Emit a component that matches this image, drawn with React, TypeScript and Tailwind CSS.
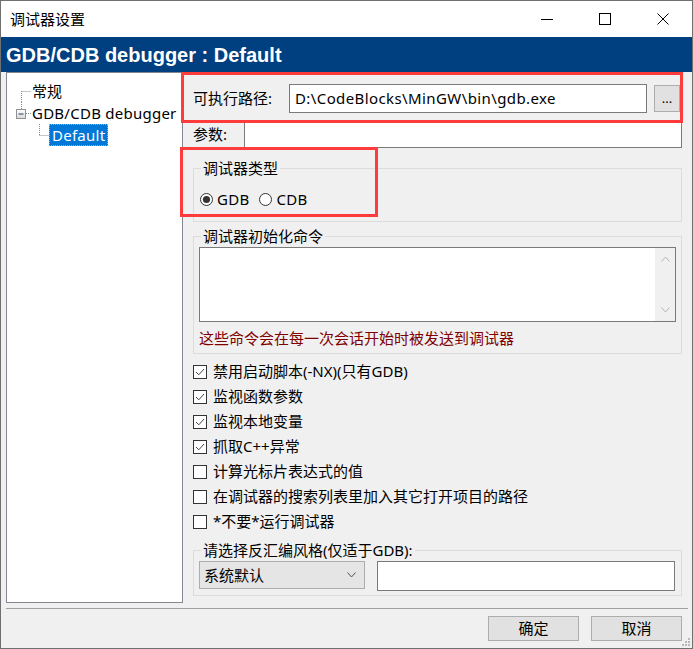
const ui = "font-['Noto_Sans','Noto_Sans_CJK_SC',sans-serif]";

function CheckBox({ checked }: { checked: boolean }) {
  return (
    <svg width="14" height="14" viewBox="0 0 14 14" className="shrink-0">
      <rect x="0.5" y="0.5" width="13" height="13" fill="#fff" stroke="#333" />
      {checked && (
        <polyline points="3,7 5.8,9.8 11,4" fill="none" stroke="#444" strokeWidth="1" />
      )}
    </svg>
  );
}

function Radio({ checked }: { checked: boolean }) {
  return (
    <svg width="13" height="13" viewBox="0 0 13 13" className="shrink-0">
      <circle cx="6.5" cy="6.5" r="6" fill="#fff" stroke="#333" />
      {checked && <circle cx="6.5" cy="6.5" r="3.6" fill="#333" />}
    </svg>
  );
}

const OPTIONS: [string, boolean][] = [
  ["禁用启动脚本(-NX)(只有GDB)", true],
  ["监视函数参数", true],
  ["监视本地变量", true],
  ["抓取C++异常", true],
  ["计算光标片表达式的值", false],
  ["在调试器的搜索列表里加入其它打开项目的路径", false],
  ["*不要*运行调试器", false],
];

function TitleBar() {
  return (
    <div className="flex h-[36px] items-center bg-white">
      <span className="pl-[9px] text-[15px] text-black">调试器设置</span>
      <div className="ml-auto flex h-full">
        <div className="flex w-[58px] items-center justify-center">
          <svg width="12" height="12" viewBox="0 0 12 12">
            <line x1="0" y1="6.5" x2="12" y2="6.5" stroke="#000" />
          </svg>
        </div>
        <div className="flex w-[58px] items-center justify-center">
          <svg width="12" height="12" viewBox="0 0 12 12">
            <rect x="0.5" y="0.5" width="11" height="11" fill="none" stroke="#000" />
          </svg>
        </div>
        <div className="flex w-[58px] items-center justify-center">
          <svg width="12" height="12" viewBox="0 0 12 12">
            <path d="M0.5 0.5 L11.5 11.5 M11.5 0.5 L0.5 11.5" stroke="#000" />
          </svg>
        </div>
      </div>
    </div>
  );
}

function Tree() {
  return (
    <div className="ml-[5px] h-full w-[177px] border border-[#828790] bg-white pt-[7px] text-[15px] text-black">
      <div className="flex h-[22px] items-center">
        <svg width="25" height="22" className="shrink-0">
          <path d="M14.5 11 V22 M14.5 11.5 H24" stroke="#8a8a8a" strokeDasharray="1 1" />
        </svg>
        <span>常规</span>
      </div>
      <div className="flex h-[22px] items-center">
        <svg width="25" height="22" className="shrink-0">
          <defs>
            <linearGradient id="bx" x1="0" y1="0" x2="0" y2="1">
              <stop offset="0" stopColor="#fff" />
              <stop offset="1" stopColor="#d8d8d8" />
            </linearGradient>
          </defs>
          <path d="M14.5 0 V7" stroke="#8a8a8a" strokeDasharray="1 1" />
          <rect x="9.5" y="7.5" width="9" height="9" fill="url(#bx)" stroke="#919191" />
          <line x1="11.5" y1="12" x2="16.5" y2="12" stroke="#1e3a5f" />
          <path d="M19 11.5 H24" stroke="#8a8a8a" strokeDasharray="1 1" />
        </svg>
        <span className="tracking-[0.25px]">GDB/CDB debugger</span>
      </div>
      <div className="flex h-[22px] items-center">
        <svg width="42" height="22" className="shrink-0">
          <path d="M32.5 0 V11 M32.5 11.5 H42" stroke="#8a8a8a" strokeDasharray="1 1" />
        </svg>
        <span className="flex h-[22px] items-center border border-dotted border-[#f2a23a] bg-[#0078d7] px-[2px] tracking-[0.25px] text-white">
          Default
        </span>
      </div>
    </div>
  );
}

export default function App() {
  return (
    <div
      className={`relative flex h-[649px] w-[693px] flex-col overflow-hidden border border-[#707070] bg-[#f0f0f0] ${ui}`}
    >
      <TitleBar />

      <div className="flex h-[35px] items-center bg-[#004080] pl-[5px]">
        <span className="font-['Liberation_Sans',Arial,sans-serif] text-[20px] font-bold text-white">
          GDB/CDB debugger : Default
        </span>
      </div>

      <div className="flex h-[531px]">
        <Tree />

        <div className="flex flex-1 flex-col px-[10px] text-[15px] text-black">
          <div className="mt-[12px] flex h-[29px] items-center">
            <span className="w-[96px] shrink-0">可执行路径:</span>
            <div className="flex h-[29px] w-[358px] items-center border border-[#7a7a7a] bg-white pl-[5px] tracking-[0.4px]">
              D:\CodeBlocks\MinGW\bin\gdb.exe
            </div>
            <div className="ml-[7px] flex h-[27px] w-[26px] items-center justify-center border border-[#adadad] bg-[#e1e1e1] text-[13px] leading-none">
              ...
            </div>
          </div>

          <div className="mt-[7px] flex h-[28px] items-center">
            <span className="w-[51px] shrink-0">参数:</span>
            <div className="h-[28px] flex-1 border border-[#7a7a7a] bg-white" />
          </div>

          <fieldset className="mt-[10px] border border-[#dcdcdc]">
            <legend className="ml-[7px] px-[2px] leading-[20px]">调试器类型</legend>
            <div className="mt-[11px] mb-[12px] flex h-[20px] items-center pl-[6px]">
              <Radio checked />
              <span className="ml-[4px] tracking-[0.3px]">GDB</span>
              <span className="ml-[9px]">
                <Radio checked={false} />
              </span>
              <span className="ml-[5px] tracking-[0.3px]">CDB</span>
            </div>
          </fieldset>

          <fieldset className="mt-[4px] border border-[#dcdcdc]">
            <legend className="ml-[7px] px-[2px] leading-[20px]">调试器初始化命令</legend>
            <div className="mx-[5px] mt-[1px] flex h-[75px] border border-[#7a7a7a] bg-white">
              <div className="flex-1" />
              <div className="flex w-[20px] flex-col items-center justify-between bg-[#f0f0f0] py-[8px]">
                <svg width="9" height="6" viewBox="0 0 9 6">
                  <polyline points="0.5,5.5 4.5,1 8.5,5.5" fill="none" stroke="#b5b5b5" />
                </svg>
                <svg width="9" height="6" viewBox="0 0 9 6">
                  <polyline points="0.5,0.5 4.5,5 8.5,0.5" fill="none" stroke="#b5b5b5" />
                </svg>
              </div>
            </div>
            <div className="mt-[6px] mb-[5px] pl-[5px] leading-[20px] text-[#800000]">
              这些命令会在每一次会话开始时被发送到调试器
            </div>
          </fieldset>

          <div className="mt-[5px] flex flex-col">
            {OPTIONS.map(([label, checked]) => (
              <div key={label} className="flex h-[25px] items-center gap-[6px]">
                <CheckBox checked={checked} />
                <span>{label}</span>
              </div>
            ))}
          </div>

          <fieldset className="mt-[6px] border border-[#dcdcdc]">
            <legend className="ml-[7px] px-[2px] leading-[20px]">请选择反汇编风格(仅适于GDB):</legend>
            <div className="mt-[1px] mb-[4px] flex items-start pl-[5px]">
              <div className="flex h-[28px] w-[166px] items-center justify-between border border-[#adadad] bg-[#e5e5e5] pl-[4px] pr-[8px]">
                <span>系统默认</span>
                <svg width="9" height="6" viewBox="0 0 9 6">
                  <polyline points="0.5,0.5 4.5,5 8.5,0.5" fill="none" stroke="#555" />
                </svg>
              </div>
              <div className="ml-[12px] h-[30px] w-[298px] border border-[#7a7a7a] bg-white" />
            </div>
          </fieldset>
        </div>
      </div>

      <div className="mt-[5px] ml-[5px] mr-[4px] h-px bg-[#a0a0a0]" />

      <div className="mt-[7px] flex justify-end gap-[12px] pr-[10px] text-[15px] text-black">
        <div className="flex h-[25px] w-[91px] items-center justify-center border border-[#adadad] bg-[#e1e1e1]">
          确定
        </div>
        <div className="flex h-[25px] w-[91px] items-center justify-center border border-[#adadad] bg-[#e1e1e1]">
          取消
        </div>
      </div>

      <svg className="absolute right-[1px] bottom-[1px]" width="10" height="10" viewBox="0 0 10 10">
        {[
          [7, 1],
          [4, 4],
          [7, 4],
          [1, 7],
          [4, 7],
          [7, 7],
        ].map(([x, y]) => (
          <rect key={`${x}-${y}`} x={x} y={y} width="2" height="2" fill="#b8b8b8" />
        ))}
      </svg>

      <div className="pointer-events-none absolute top-[71px] left-[180px] h-[51px] w-[502px] border-[3px] border-[#ff3b3b]" />
      <div className="pointer-events-none absolute top-[146px] left-[179px] h-[70px] w-[198px] border-[3px] border-[#ff3b3b]" />
    </div>
  );
}
